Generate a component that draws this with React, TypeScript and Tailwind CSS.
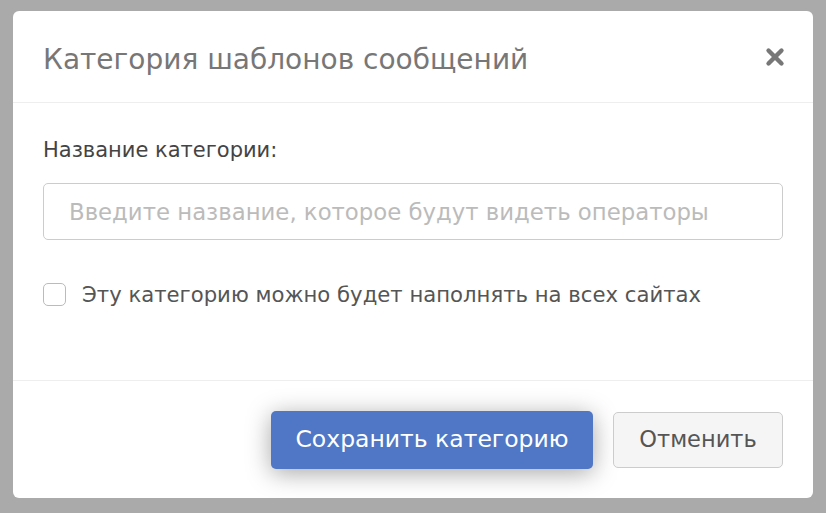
import { X } from 'lucide-react'

export default function App() {
  return (
    <div className="h-screen w-full bg-[#aaaaaa] pl-[13px] pt-[11px] font-['DejaVu_Sans',Verdana,sans-serif]">
      <div className="flex h-[487px] w-[800px] flex-col rounded-[6px] bg-white">
        <div className="flex h-[92px] items-center justify-between border-b border-[#eeeeee] pl-[30px] pr-[25px]">
          <h1 className="mt-[6px] text-[28px] font-normal leading-none text-[#777777]">Категория шаблонов сообщений</h1>
          <X className="h-[26px] w-[26px] text-[#777777]" strokeWidth={4} />
        </div>
        <div className="flex-1 border-b border-[#eeeeee] px-[30px] pt-[37px]">
          <label className="block text-[21px] leading-none text-[#444444]">Название категории:</label>
          <input
            className="mt-[22px] h-[57px] w-full rounded-[5px] border border-[#cccccc] px-[25px] text-[22.8px] text-[#555555] outline-none placeholder:text-[#bbbbbb]"
            placeholder="Введите название, которое будут видеть операторы"
          />
          <label className="mt-[43px] flex items-center gap-[16px]">
            <span className="h-[23px] w-[23px] shrink-0 rounded-[5px] border border-[#bbbbbb] bg-white" />
            <span className="text-[21.2px] leading-none text-[#555555]">Эту категорию можно будет наполнять на всех сайтах</span>
          </label>
        </div>
        <div className="flex h-[117px] items-center justify-end gap-[20px] pr-[30px]">
          <button className="h-[58px] w-[322px] rounded-[5px] bg-[#4f77c5] text-[23.5px] text-white shadow-[0_4px_24px_rgba(0,0,0,0.35)]">
            Сохранить категорию
          </button>
          <button className="h-[56px] w-[170px] rounded-[5px] border border-[#cccccc] bg-[#f5f5f5] text-[22.5px] text-[#555555]">
            Отменить
          </button>
        </div>
      </div>
    </div>
  )
}
